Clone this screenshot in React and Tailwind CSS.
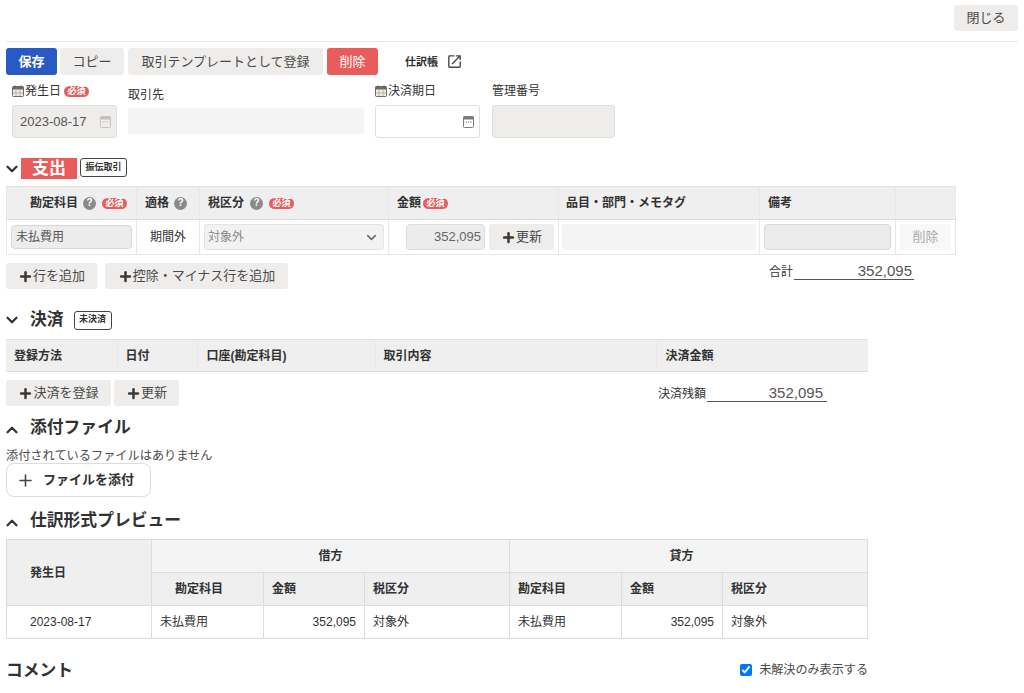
import React from 'react';
import { ChevronDown, ChevronUp, Plus } from 'lucide-react';

const btn = 'h-[26px] rounded-[3px] bg-[#efedeb] text-[13px] text-[#4a4a4a] flex items-center justify-center whitespace-nowrap';
const th = 'border border-[#dfdfdf] border-x-[#e8e8e8] bg-[#efefef] text-left font-bold text-[12px] text-[#323232]';
const td = 'border border-[#e8e8e8] text-[12px] text-[#323232]';
const th3 = 'border border-[#dcdcdc] bg-[#efefef] font-bold text-[12px] text-[#323232]';
const td3 = 'border border-[#dcdcdc] text-[12px] text-[#323232]';

const Required = () => (
  <span className="inline-flex h-[11px] w-[25px] items-center justify-center rounded-full bg-[#e85c5c] text-[9px] font-bold leading-none text-white">必須</span>
);

const Help = () => (
  <span className="inline-flex h-[13px] w-[13px] items-center justify-center rounded-full bg-[#8a8a8a] text-[10px] font-bold leading-none text-white">?</span>
);

const Thick = () => <Plus size={15} strokeWidth={4} className="text-[#3a3a3a]" />;

const LabelCalendar = () => (
  <svg width="12" height="12" viewBox="0 0 12 12" className="shrink-0">
    <rect x="0.5" y="1.5" width="11" height="10" rx="1" fill="#f1ece4" stroke="#6b6b6b" />
    <rect x="0.5" y="1.5" width="11" height="3" fill="#6b6b6b" />
    <path d="M3 0.5v2M9 0.5v2" stroke="#555" />
    <path d="M4 5v6M8 5v6M1 8h10" stroke="#a99f92" strokeWidth="0.7" />
  </svg>
);

const FieldCalendar = ({ color }) => (
  <svg width="11" height="13" viewBox="0 0 11 13" className="shrink-0">
    <path d="M1.5 1.5h8a1 1 0 011 1v9a1 1 0 01-1 1h-8a1 1 0 01-1-1v-9a1 1 0 011-1z" fill="none" stroke={color} />
    <rect x="0.5" y="1.5" width="10" height="3" fill={color} />
    <path d="M2.5 7h1.4M4.8 7h1.4M7.1 7h1.4" stroke={color} />
  </svg>
);

const Tag = ({ children, className }) => (
  <span className={`inline-flex h-[19px] items-center justify-center rounded-[3px] border border-[#444] text-[9px] font-bold text-[#323232] ${className}`}>{children}</span>
);

const Heading = ({ children }) => (
  <div className="flex items-center">
    <ChevronUp size={18} strokeWidth={3} className="-ml-[3px] mt-[6px] text-[#323232]" />
    <h2 className="ml-[9px] pt-[2px] text-[16.8px] font-bold leading-[22px] text-[#323232]">{children}</h2>
  </div>
);

const App = () => {
  return (
    <div className="h-[693px] w-[1024px] overflow-hidden bg-white px-[6px] text-[12px] text-[#323232] font-['Liberation_Sans','Noto_Sans_CJK_JP',sans-serif]">
      <div className="flex h-[42px] justify-end border-b border-[#e8e8e8] pt-[5px]">
        <button className={`${btn} w-[64px]`}>閉じる</button>
      </div>

      <div className="mt-[6px] flex h-[27px] items-center">
        <button className="flex h-[27px] w-[51px] items-center justify-center rounded-[3px] bg-[#2859c5] text-[13px] font-bold text-white">保存</button>
        <button className={`${btn} ml-[3px] h-[27px] w-[64px]`}>コピー</button>
        <button className={`${btn} ml-[4px] h-[27px] w-[195px]`}>取引テンプレートとして登録</button>
        <button className="ml-[4px] flex h-[27px] w-[51px] items-center justify-center rounded-[3px] bg-[#e85c5c] text-[13px] text-white">削除</button>
        <span className="ml-[27px] mt-[1px] text-[11px] font-bold">仕訳帳</span>
        <svg width="17" height="17" viewBox="0 0 24 24" className="ml-[8px] fill-[#4a4a4a]">
          <path d="M19 19H5V5h7V3H5a2 2 0 00-2 2v14a2 2 0 002 2h14c1.1 0 2-.9 2-2v-7h-2v7zM14 3v2h3.59l-9.83 9.83 1.41 1.41L19 6.41V10h2V3h-7z" />
        </svg>
      </div>

      <div className="flex h-[63px] items-start pt-[8px]">
        <div className="ml-[6px] w-[105px]">
          <div className="flex h-[16px] items-center">
            <LabelCalendar />
            <span className="ml-[1px]">発生日</span>
            <span className="ml-[3px] flex"><Required /></span>
          </div>
          <div className="mt-[6px] flex h-[33px] items-center justify-between rounded-[3px] border border-[#e2dfd8] bg-[#efedeb] pl-[7px] pr-[5px] text-[13px] text-[#555]">
            2023-08-17
            <FieldCalendar color="#c4c2be" />
          </div>
        </div>
        <div className="ml-[11px] w-[236px]">
          <div className="mt-[4px] h-[16px] leading-[16px]">取引先</div>
          <div className="mt-[5px] h-[26px] rounded-[3px] bg-[#f4f4f4]" />
        </div>
        <div className="ml-[11px] w-[105px]">
          <div className="flex h-[16px] items-center">
            <LabelCalendar />
            <span className="ml-[1px]">決済期日</span>
          </div>
          <div className="mt-[6px] flex h-[33px] items-center justify-end rounded-[3px] border border-[#e2dfd8] bg-white pr-[5px]">
            <FieldCalendar color="#7a7a7a" />
          </div>
        </div>
        <div className="ml-[12px] w-[123px]">
          <div className="h-[16px] leading-[16px]">管理番号</div>
          <div className="mt-[6px] h-[33px] rounded-[3px] border border-[#e2dfd8] bg-[#efedeb]" />
        </div>
      </div>

      <div className="mt-[20px] flex items-start">
        <ChevronDown size={18} strokeWidth={3} className="-ml-[3px] mt-[2px] text-[#323232]" />
        <span className="flex h-[21px] w-[56px] items-center justify-center bg-[#e85c5c] text-[17px] font-bold text-white">支出</span>
        <Tag className="ml-[3px] w-[47px]">振伝取引</Tag>
      </div>

      <table className="mt-[7px] w-[949px] table-fixed border-collapse">
        <colgroup>
          <col className="w-[130px]" />
          <col className="w-[63px]" />
          <col className="w-[189px]" />
          <col className="w-[170px]" />
          <col className="w-[201px]" />
          <col className="w-[136px]" />
          <col className="w-[60px]" />
        </colgroup>
        <thead>
          <tr className="h-[33px]">
            <th className={`${th} pl-[23px]`}>
              <div className="flex items-center">勘定科目<span className="ml-[5px] flex"><Help /></span><span className="ml-[6px] flex"><Required /></span></div>
            </th>
            <th className={`${th} pl-[8px]`}>
              <div className="flex items-center">適格<span className="ml-[5px] flex"><Help /></span></div>
            </th>
            <th className={`${th} pl-[8px]`}>
              <div className="flex items-center">税区分<span className="ml-[6px] flex"><Help /></span><span className="ml-[6px] flex"><Required /></span></div>
            </th>
            <th className={`${th} pl-[8px]`}>
              <div className="flex items-center">金額<span className="ml-[2px] flex"><Required /></span></div>
            </th>
            <th className={`${th} pl-[7px]`}>品目・部門・メモタグ</th>
            <th className={`${th} pl-[8px]`}>備考</th>
            <th className={th} />
          </tr>
        </thead>
        <tbody>
          <tr className="h-[35px]">
            <td className={`${td} px-[4px]`}>
              <div className="flex h-[24px] items-center rounded-[4px] border border-[#d8d8d8] bg-[#ececec] pl-[4px] text-[#555]">未払費用</div>
            </td>
            <td className={`${td} text-center`}>期間外</td>
            <td className={`${td} px-[4px]`}>
              <div className="flex h-[26px] items-center justify-between rounded-[3px] border border-[#e4e4e4] bg-[#f2f2f2] pl-[3px] pr-[4px] text-[#8a8a8a]">
                対象外
                <ChevronDown size={15} strokeWidth={2.5} className="text-[#6a6a6a]" />
              </div>
            </td>
            <td className={td}>
              <div className="flex items-center pl-[17px]">
                <div className="flex h-[26px] w-[79px] items-center justify-end rounded-[4px] border border-[#dcdcdc] bg-[#ececec] pr-[3px] text-[13px] text-[#666]">352,095</div>
                <button className={`${btn} ml-[4px] w-[65px]`}><Thick />更新</button>
              </div>
            </td>
            <td className={`${td} px-[3px]`}>
              <div className="h-[26px] rounded-[3px] bg-[#f4f4f4]" />
            </td>
            <td className={`${td} px-[4px]`}>
              <div className="h-[26px] rounded-[4px] border border-[#d8d8d8] bg-[#ececec]" />
            </td>
            <td className={`${td} px-[4px]`}>
              <button className="flex h-[26px] w-full items-center justify-center rounded-[3px] bg-[#f8f8f8] text-[13px] text-[#aaa]">削除</button>
            </td>
          </tr>
        </tbody>
      </table>

      <div className="mt-[8px] flex h-[26px] items-start">
        <button className={`${btn} w-[91px]`}><Thick />行を追加</button>
        <button className={`${btn} ml-[8px] w-[183px]`}><Thick />控除・マイナス行を追加</button>
        <div className="ml-[481px] flex h-[17px] w-[145px] items-end">
          <span className="leading-[16px]">合計</span>
          <span className="ml-[1px] w-[120px] border-b border-[#555] pr-[2px] text-right text-[15px] leading-[16px] text-[#555]">352,095</span>
        </div>
      </div>

      <div className="mt-[19px] flex h-[24px] items-center">
        <ChevronDown size={18} strokeWidth={3} className="-ml-[3px] text-[#323232]" />
        <h2 className="ml-[9px] text-[16.8px] font-bold text-[#323232]">決済</h2>
        <Tag className="ml-[10px] w-[38px]">未決済</Tag>
      </div>

      <table className="mt-[7px] w-[862px] table-fixed border-collapse">
        <colgroup>
          <col className="w-[111px]" />
          <col className="w-[80px]" />
          <col className="w-[178px]" />
          <col className="w-[281px]" />
          <col className="w-[212px]" />
        </colgroup>
        <thead>
          <tr className="h-[32px]">
            <th className={`${th} border-l-0 pl-[8px]`}>登録方法</th>
            <th className={`${th} pl-[8px]`}>日付</th>
            <th className={`${th} pl-[9px]`}>口座(勘定科目)</th>
            <th className={`${th} pl-[8px]`}>取引内容</th>
            <th className={`${th} border-x-0 pl-[9px]`}>決済金額</th>
          </tr>
        </thead>
      </table>

      <div className="mt-[8px] flex h-[26px] items-start">
        <button className={`${btn} w-[105px]`}><Thick />決済を登録</button>
        <button className={`${btn} ml-[3px] w-[65px]`}><Thick />更新</button>
        <div className="ml-[479px] flex h-[22px] w-[169px] items-end">
          <span className="leading-[16px]">決済残額</span>
          <span className="ml-[1px] w-[120px] border-b border-[#555] pr-[4px] text-right text-[15px] leading-[16px] text-[#555]">352,095</span>
        </div>
      </div>

      <div className="mt-[9px]">
        <Heading>添付ファイル</Heading>
      </div>
      <p className="mt-[10px] text-[12.2px] leading-[14px] text-[#4a4a4a]">添付されているファイルはありません</p>
      <button className="flex h-[34px] w-[145px] items-center rounded-[8px] border border-[#dcdcdc] bg-white pl-[9px] text-[13px] font-bold text-[#323232]">
        <Plus size={19} strokeWidth={2} className="text-[#444]" />
        <span className="ml-[8px]">ファイルを添付</span>
      </button>

      <div className="mt-[11px]">
        <Heading>仕訳形式プレビュー</Heading>
      </div>

      <table className="mt-[7px] w-[861px] table-fixed border-collapse">
        <colgroup>
          <col className="w-[145px]" />
          <col className="w-[112px]" />
          <col className="w-[101px]" />
          <col className="w-[145px]" />
          <col className="w-[112px]" />
          <col className="w-[101px]" />
          <col className="w-[145px]" />
        </colgroup>
        <thead>
          <tr className="h-[33px]">
            <th rowSpan={2} className={`${th3} pl-[23px] text-left`}>発生日</th>
            <th colSpan={3} className={`${th3} bg-[#f5f4f4]`}>借方</th>
            <th colSpan={3} className={`${th3} bg-[#f5f4f4] pr-[14px]`}>貸方</th>
          </tr>
          <tr className="h-[33px]">
            <th className={`${th3} pl-[23px] text-left`}>勘定科目</th>
            <th className={`${th3} pl-[8px] text-left`}>金額</th>
            <th className={`${th3} pl-[8px] text-left`}>税区分</th>
            <th className={`${th3} pl-[8px] text-left`}>勘定科目</th>
            <th className={`${th3} pl-[8px] text-left`}>金額</th>
            <th className={`${th3} pl-[8px] text-left`}>税区分</th>
          </tr>
        </thead>
        <tbody>
          <tr className="h-[33px]">
            <td className={`${td3} pl-[23px]`}>2023-08-17</td>
            <td className={`${td3} pl-[8px]`}>未払費用</td>
            <td className={`${td3} pr-[8px] text-right`}>352,095</td>
            <td className={`${td3} pl-[8px]`}>対象外</td>
            <td className={`${td3} pl-[8px]`}>未払費用</td>
            <td className={`${td3} pr-[8px] text-right`}>352,095</td>
            <td className={`${td3} pl-[8px]`}>対象外</td>
          </tr>
        </tbody>
      </table>

      <div className="mt-[19px] flex w-[862px] items-center justify-between">
        <h2 className="pt-[1px] text-[16.8px] font-bold leading-[23px]">コメント</h2>
        <label className="flex items-center text-[12.1px] text-[#4a4a4a]">
          <input type="checkbox" defaultChecked className="mr-[7px] h-[12px] w-[12px]" />
          未解決のみ表示する
        </label>
      </div>
    </div>
  );
};

export default App;
